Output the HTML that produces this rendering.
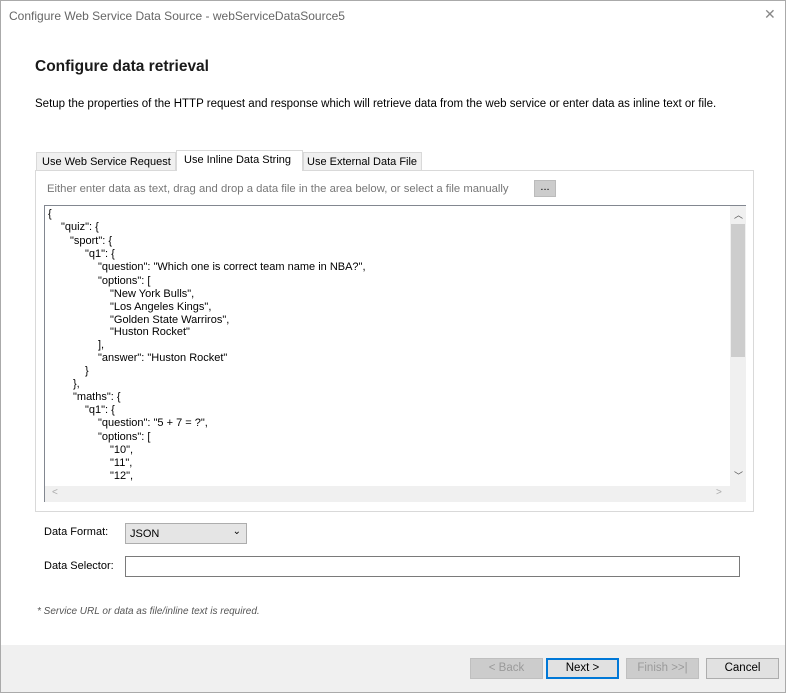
<!DOCTYPE html>
<html><head><style>
*{margin:0;padding:0;box-sizing:border-box}
body{width:786px;height:693px;position:relative;background:#fff;font-family:"Liberation Sans",sans-serif;font-size:12px;color:#000;overflow:hidden}
.a{position:absolute;white-space:nowrap}
.btn{position:absolute;top:658px;height:21px;width:73px;border:1px solid #adadad;background:#e1e1e1;text-align:center;line-height:19px;font-size:11.5px}
.dis{color:#9a9a9a;border-color:#bfbfbf;background:#ccc}
.code .a{font-size:11px}
</style></head><body>
<div class="a" style="left:0;top:0;width:786px;height:693px;border:1px solid #aaa"></div>
<div class="a" style="left:9px;top:9px;color:#666;font-size:12px">Configure Web Service Data Source - webServiceDataSource5</div>
<div class="a" style="left:764px;top:6px;color:#888;font-size:14px">✕</div>
<div class="a" style="left:35px;top:58px;font-size:15.5px;font-weight:bold;color:#1a1a1a">Configure data retrieval</div>
<div class="a" style="left:35px;top:98px;font-size:11.5px">Setup the properties of the HTTP request and response which will retrieve data from the web service or enter data as inline text or file.</div>
<div class="a" style="left:35px;top:170px;width:719px;height:342px;border:1px solid #d9d9d9"></div>
<div class="a" style="left:36px;top:152px;width:140px;height:19px;border:1px solid #d9d9d9;background:#f0f0f0;font-size:11px;padding:3px 0 0 5px">Use Web Service Request</div>
<div class="a" style="left:176px;top:150px;width:127px;height:21px;border:1px solid #d9d9d9;border-bottom:none;background:#fff;font-size:11px;padding:3px 0 0 7px">Use Inline Data String</div>
<div class="a" style="left:303px;top:152px;width:119px;height:19px;border:1px solid #d9d9d9;background:#f0f0f0;font-size:11px;padding:3px 0 0 3px">Use External Data File</div>
<div class="a" style="left:47px;top:183px;font-size:11.3px;color:#777">Either enter data as text, drag and drop a data file in the area below, or select a file manually</div>
<div class="a" style="left:534px;top:180px;width:22px;height:17px;background:#ccc;border:1px solid #bbb;text-align:center;font-size:11px;line-height:12px">...</div>
<div class="a code" style="left:44px;top:205px;width:702px;height:297px;border:1px solid #828790">
<div class="a" style="left:685px;top:0;width:16px;height:280px;background:#f0f0f0"></div>
<div class="a" style="left:686px;top:18px;width:14px;height:133px;background:#cdcdcd"></div>
<div class="a" style="left:689px;top:2px;font-size:9px;color:#555">︿</div>
<div class="a" style="left:689px;top:263px;font-size:9px;color:#555">﹀</div>
<div class="a" style="left:0;top:280px;width:701px;height:16px;background:#f0f0f0"></div>
<div class="a" style="left:7px;top:281px;color:#aaa;font-size:10px">&lt;</div>
<div class="a" style="left:671px;top:281px;color:#aaa;font-size:10px">&gt;</div>
</div>
<div class="code">
<div class="a" style="left:48px;top:208px">{</div>
<div class="a" style="left:61px;top:221px">"quiz": {</div>
<div class="a" style="left:70px;top:235px">"sport": {</div>
<div class="a" style="left:85px;top:248px">"q1": {</div>
<div class="a" style="left:98px;top:261px">"question": "Which one is correct team name in NBA?",</div>
<div class="a" style="left:98px;top:275px">"options": [</div>
<div class="a" style="left:110px;top:288px">"New York Bulls",</div>
<div class="a" style="left:110px;top:301px">"Los Angeles Kings",</div>
<div class="a" style="left:110px;top:314px">"Golden State Warriros",</div>
<div class="a" style="left:110px;top:326px">"Huston Rocket"</div>
<div class="a" style="left:98px;top:339px">],</div>
<div class="a" style="left:98px;top:352px">"answer": "Huston Rocket"</div>
<div class="a" style="left:85px;top:365px">}</div>
<div class="a" style="left:73px;top:378px">},</div>
<div class="a" style="left:73px;top:391px">"maths": {</div>
<div class="a" style="left:85px;top:404px">"q1": {</div>
<div class="a" style="left:98px;top:417px">"question": "5 + 7 = ?",</div>
<div class="a" style="left:98px;top:431px">"options": [</div>
<div class="a" style="left:110px;top:444px">"10",</div>
<div class="a" style="left:110px;top:457px">"11",</div>
<div class="a" style="left:110px;top:470px">"12",</div>
</div>
<div class="a" style="left:44px;top:526px;font-size:11px">Data Format:</div>
<div class="a" style="left:125px;top:523px;width:122px;height:21px;border:1px solid #adadad;background:#e5e5e5;font-size:11px;padding:4px 0 0 4px">JSON<span style="position:absolute;right:5px;top:2px;font-size:10px">⌄</span></div>
<div class="a" style="left:44px;top:560px;font-size:11px">Data Selector:</div>
<div class="a" style="left:125px;top:556px;width:615px;height:21px;border:1px solid #7a7a7a;background:#fff"></div>
<div class="a" style="left:37px;top:606px;font-size:10px;font-style:italic;color:#555">* Service URL or data as file/inline text is required.</div>
<div class="a" style="left:1px;top:645px;width:784px;height:47px;background:#f0f0f0"></div>
<div class="btn dis" style="left:470px">&lt; Back</div>
<div class="btn" style="left:546px;border:2px solid #0078d7;line-height:17px">Next &gt;</div>
<div class="btn dis" style="left:626px">Finish &gt;&gt;|</div>
<div class="btn" style="left:706px">Cancel</div>
</body></html>
